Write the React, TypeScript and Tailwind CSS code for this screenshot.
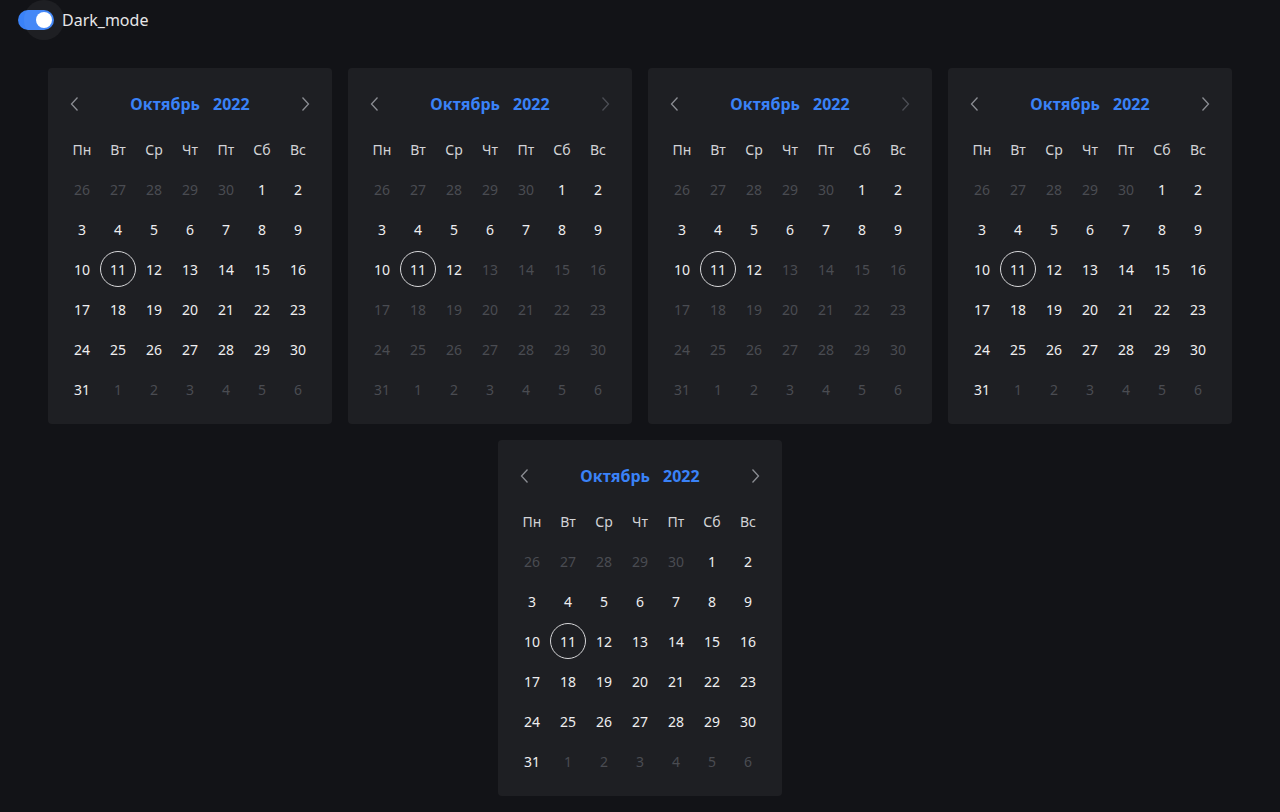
import { useState } from "react";

const weekDays = ["Пн", "Вт", "Ср", "Чт", "Пт", "Сб", "Вс"];

type Day = { n: number; inMonth: boolean };

const buildDays = (): Day[] => {
  const days: Day[] = [];
  for (let d = 26; d <= 30; d++) days.push({ n: d, inMonth: false });
  for (let d = 1; d <= 31; d++) days.push({ n: d, inMonth: true });
  for (let d = 1; d <= 6; d++) days.push({ n: d, inMonth: false });
  return days;
};

function Chevron({ dir, disabled }: { dir: "left" | "right"; disabled?: boolean }) {
  return (
    <svg
      width="16"
      height="16"
      viewBox="0 0 16 16"
      fill="none"
      className={disabled ? "text-[#4c4e55]" : "text-[#8b8d93]"}
    >
      <path
        d={dir === "left" ? "M10.5 1.5 L4.5 8 L10.5 14.5" : "M5.5 1.5 L11.5 8 L5.5 14.5"}
        stroke="currentColor"
        strokeWidth="1.3"
      />
    </svg>
  );
}

function Calendar({ maxDay, nextDisabled }: { maxDay?: number; nextDisabled?: boolean }) {
  const days = buildDays();
  return (
    <div className="w-[284px] rounded-[4px] bg-[#1e1f23] px-4 pt-4 pb-[17px]">
      <div className="-mx-[5px] flex h-10 items-center justify-between">
        <button type="button" className="flex h-8 w-8 items-center justify-center">
          <Chevron dir="left" />
        </button>
        <div className="flex items-center gap-[13px] text-[16px] font-bold text-[#3a82f7]">
          <span>Октябрь</span>
          <span>2022</span>
        </div>
        <button type="button" className="flex h-8 w-8 items-center justify-center">
          <Chevron dir="right" disabled={nextDisabled} />
        </button>
      </div>
      <div className="mt-[7px] grid grid-cols-7">
        {weekDays.map((w) => (
          <div key={w} className="flex h-9 items-center justify-center text-[14px] text-[#d2d3d6]">
            {w}
          </div>
        ))}
      </div>
      <div className="mt-1 grid grid-cols-7 gap-y-1">
        {days.map((d, i) => {
          const disabled = !d.inMonth || (maxDay !== undefined && d.n > maxDay);
          const today = d.inMonth && d.n === 11;
          return (
            <div key={i} className="flex h-9 items-center justify-center">
              <span
                className={`flex h-9 w-9 items-center justify-center rounded-full text-[14px] ${
                  today ? "border border-[#d6d6d8]" : ""
                } ${disabled ? "text-[#4a4c52]" : "text-[#eeeef0]"}`}
              >
                {d.n}
              </span>
            </div>
          );
        })}
      </div>
    </div>
  );
}

export default function App() {
  const [dark, setDark] = useState(true);
  return (
    <div
      className="min-h-[812px] bg-[#121317] text-white"
      style={{ fontFamily: '"Noto Sans", "Open Sans", sans-serif' }}
    >
      <div className="flex h-10 items-center pl-[18px]">
        <button
          type="button"
          onClick={() => setDark(!dark)}
          className="relative h-[20px] w-[36px] rounded-full bg-[#3a82f7]"
        >
          <span className="absolute top-1/2 left-[26px] h-10 w-10 -translate-x-1/2 -translate-y-1/2 rounded-full bg-white/5" />
          <span
            className={`absolute top-[2px] h-4 w-4 rounded-full bg-white ${dark ? "left-[18px]" : "left-[2px]"}`}
          />
        </button>
        <span className="ml-2 text-[16px] text-[#e6e6e8]">Dark_mode</span>
      </div>
      <div className="mt-7 flex flex-wrap justify-center gap-4 px-12">
        <Calendar />
        <Calendar maxDay={12} nextDisabled />
        <Calendar maxDay={12} nextDisabled />
        <Calendar />
        <Calendar />
      </div>
    </div>
  );
}
